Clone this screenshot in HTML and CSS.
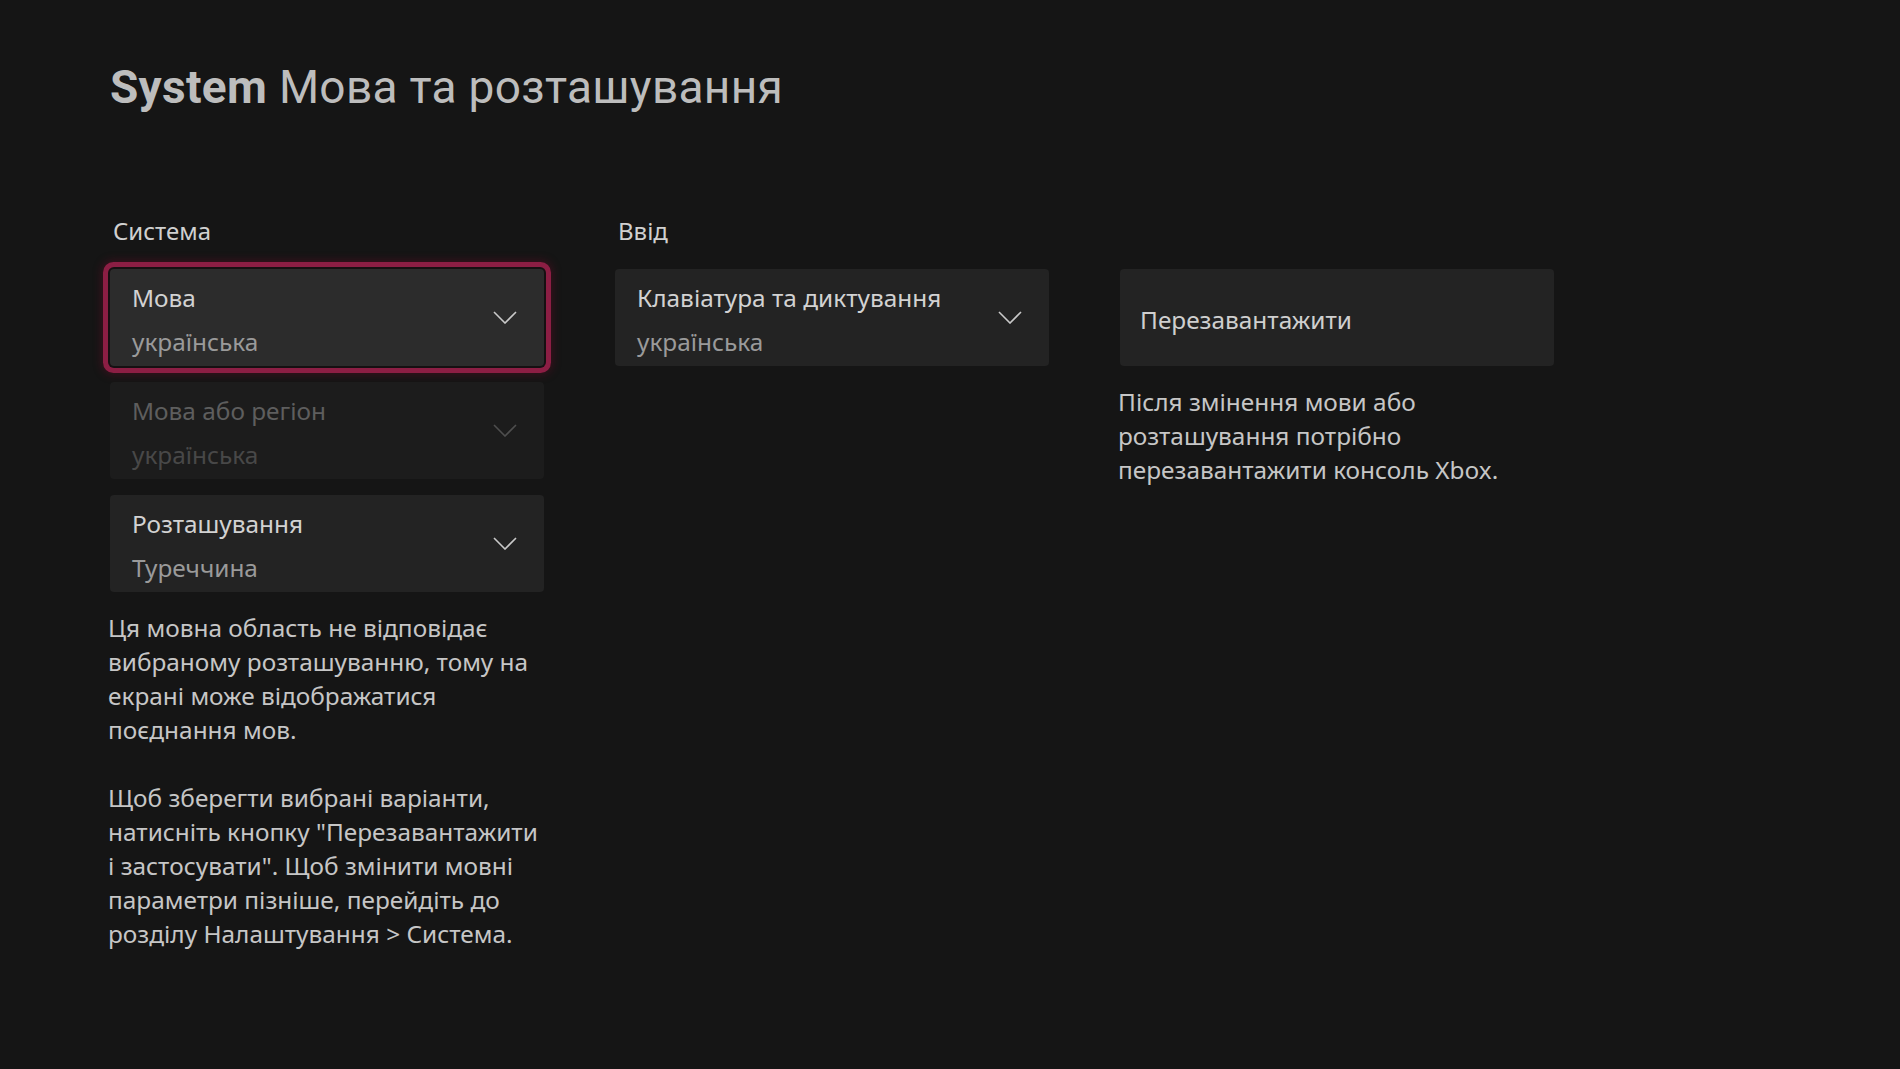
FILE: index.html
```html
<!DOCTYPE html>
<html lang="uk">
<head>
<meta charset="utf-8">
<title>System Мова та розташування</title>
<link rel="stylesheet" href="styles.css">
</head>
<body>
<main class="page">
  <h1 class="title"><span class="title-bold">System</span> Мова та розташування</h1>
  <div class="columns">
    <section class="col">
      <h2 class="col-label">Система</h2>
      <div class="stack">
        <div class="dropdown focused">
          <div class="dd-text">
            <div class="dd-name">Мова</div>
            <div class="dd-value">українська</div>
          </div>
          <svg class="chev" viewBox="0 0 24 13" width="24" height="13"><path d="M1 1 L12 12 L23 1" fill="none" stroke="currentColor" stroke-width="1.6"/></svg>
        </div>
        <div class="dropdown disabled">
          <div class="dd-text">
            <div class="dd-name">Мова або регіон</div>
            <div class="dd-value">українська</div>
          </div>
          <svg class="chev" viewBox="0 0 24 13" width="24" height="13"><path d="M1 1 L12 12 L23 1" fill="none" stroke="currentColor" stroke-width="1.6"/></svg>
        </div>
        <div class="dropdown">
          <div class="dd-text">
            <div class="dd-name">Розташування</div>
            <div class="dd-value">Туреччина</div>
          </div>
          <svg class="chev" viewBox="0 0 24 13" width="24" height="13"><path d="M1 1 L12 12 L23 1" fill="none" stroke="currentColor" stroke-width="1.6"/></svg>
        </div>
      </div>
      <div class="note">
        <p>Ця мовна область не відповідає вибраному розташуванню, тому на екрані може відображатися поєднання мов.</p>
        <p>Щоб зберегти вибрані варіанти, натисніть кнопку "Перезавантажити і застосувати". Щоб змінити мовні параметри пізніше, перейдіть до розділу Налаштування &gt; Система.</p>
      </div>
    </section>
    <section class="col">
      <h2 class="col-label">Ввід</h2>
      <div class="stack">
        <div class="dropdown">
          <div class="dd-text">
            <div class="dd-name">Клавіатура та диктування</div>
            <div class="dd-value">українська</div>
          </div>
          <svg class="chev" viewBox="0 0 24 13" width="24" height="13"><path d="M1 1 L12 12 L23 1" fill="none" stroke="currentColor" stroke-width="1.6"/></svg>
        </div>
      </div>
    </section>
    <section class="col">
      <h2 class="col-label col-label-empty">&nbsp;</h2>
      <div class="stack">
        <div class="button">Перезавантажити</div>
      </div>
      <div class="note">
        <p>Після змінення мови або розташування потрібно перезавантажити консоль Xbox.</p>
      </div>
    </section>
  </div>
</main>
</body>
</html>
```

FILE: styles.css
```css
html, body {
  margin: 0;
  padding: 0;
  background: #151515;
}
body {
  width: 1900px;
  height: 1069px;
  overflow: hidden;
  font-family: "Noto Sans", "Open Sans", sans-serif;
  color: #cfcfcf;
}
.page {
  padding: 51px 0 0 110px;
}
.title {
  margin: 0;
  font-family: Roboto, "Noto Sans", sans-serif;
  font-weight: 400;
  font-size: 46px;
  line-height: 72px;
  color: #bdbdbd;
  letter-spacing: 0.3px;
}
.title-bold {
  font-weight: 700;
}
.columns {
  display: grid;
  grid-template-columns: 434px 434px 434px;
  column-gap: 71px;
  margin-top: 92px;
}
.col-label {
  margin: 0 0 22px 3px;
  font-weight: 400;
  font-size: 24px;
  line-height: 32px;
  color: #d0d0d0;
}
.stack {
  display: flex;
  flex-direction: column;
  gap: 16px;
}
.dropdown {
  height: 97px;
  box-sizing: border-box;
  background: #232323;
  border-radius: 4px;
  display: flex;
  align-items: center;
  justify-content: space-between;
  padding: 0 27px 0 22px;
  color: #c9c9c9;
}
.dropdown.focused {
  background: #2c2c2c;
  box-shadow: 0 0 0 2px #161012, 0 0 0 7px #8c1e44, 0 0 10px 8px rgba(110, 10, 40, 0.45);
}
.dropdown.disabled {
  background: #1c1c1c;
  color: #4e4e4e;
}
.dd-text {
  display: flex;
  flex-direction: column;
  gap: 8px;
  padding-top: 4px;
}
.dd-name {
  font-size: 24.4px;
  line-height: 36px;
  color: #d2d2d2;
  white-space: nowrap;
}
.dd-value {
  font-size: 24.4px;
  line-height: 36px;
  color: #9a9a9a;
}
.disabled .dd-name {
  color: #5e5e5e;
}
.disabled .dd-value {
  color: #484848;
}
.chev {
  display: block;
  flex: none;
}
.button {
  height: 97px;
  box-sizing: border-box;
  background: #232323;
  border-radius: 4px;
  display: flex;
  align-items: center;
  padding: 3px 20px 0;
  font-size: 24.4px;
  color: #cfcfcf;
}
.note {
  margin: 19px 0 0 -2px;
  font-size: 24.4px;
  line-height: 34px;
  color: #c6c6c6;
}
.note p {
  margin: 0 0 34px 0;
}
```
